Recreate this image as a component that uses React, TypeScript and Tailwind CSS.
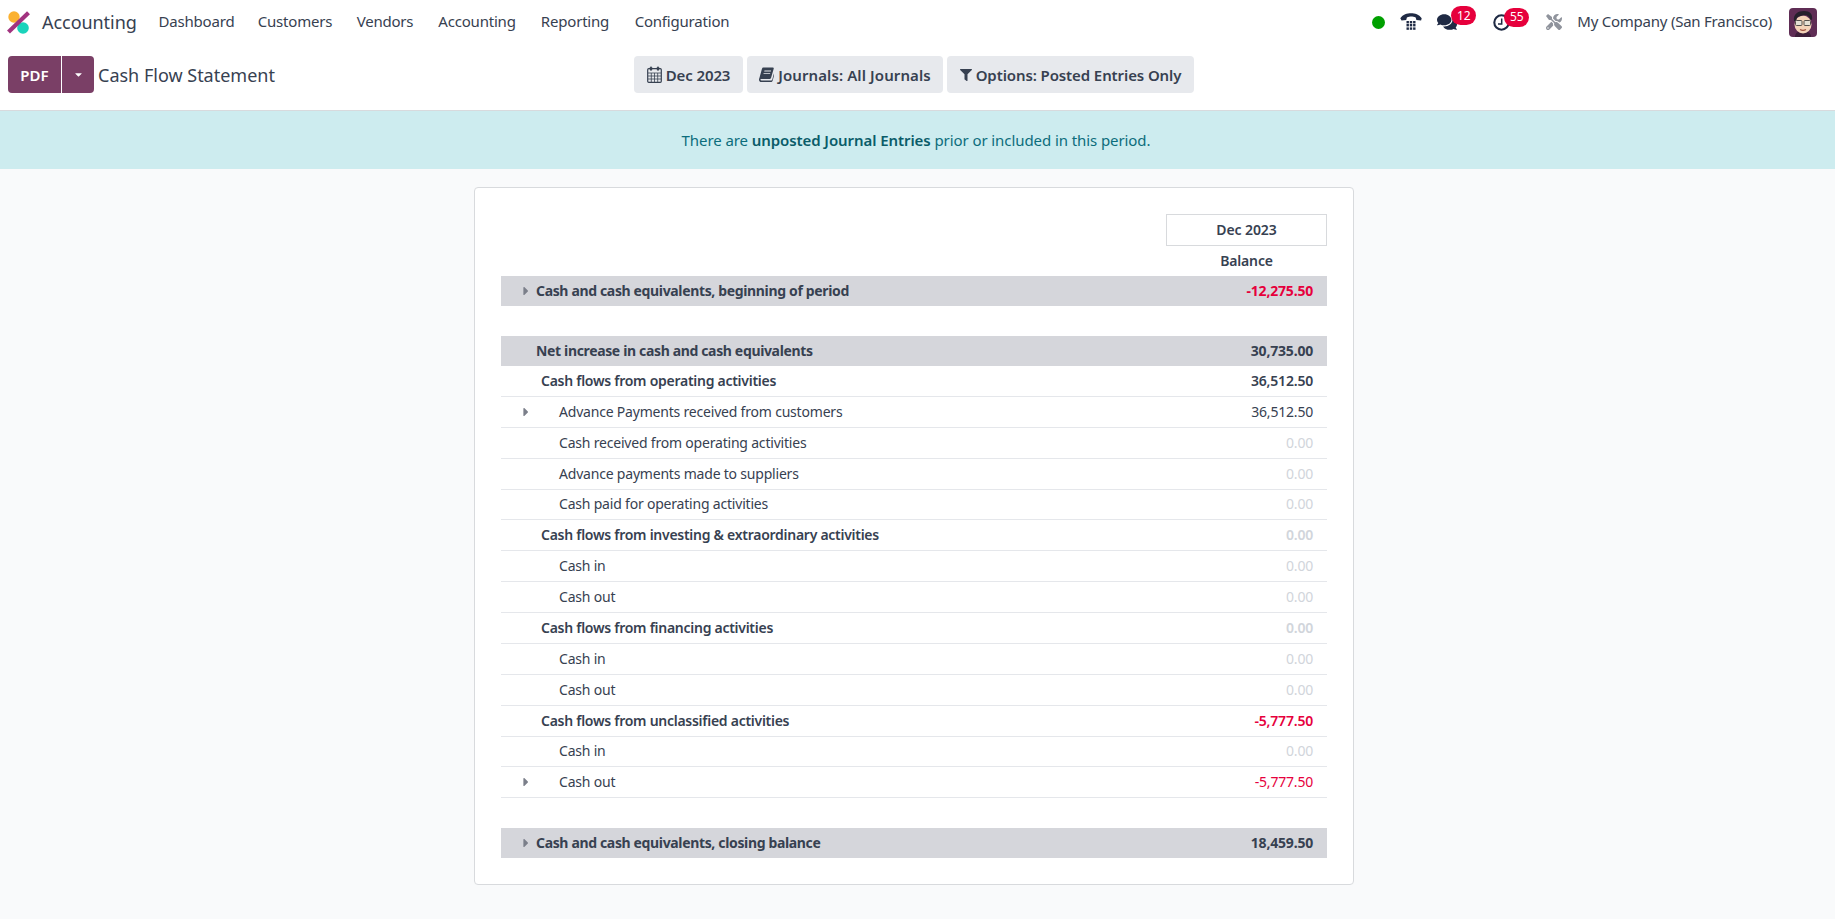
import React from "react";
import { FaFilter, FaComments, FaTools, FaCaretDown, FaCaretRight } from "react-icons/fa";

const FONT = "font-['Noto_Sans','Open_Sans',sans-serif]";

const Calendar = () => (
  <svg width="15" height="17" viewBox="0 0 15 17" className="shrink-0" fill="none" stroke="#374151">
    <rect x="0.7" y="2.7" width="13.6" height="13.6" rx="1" strokeWidth="1.2" />
    <path d="M1 7h13M1 10h13M1 13h13M4.3 7v9M7.5 7v9M10.7 7v9" strokeWidth="0.8" />
    <rect x="3" y="0.7" width="2" height="3.8" rx="1" fill="#374151" strokeWidth="0.4" />
    <rect x="10" y="0.7" width="2" height="3.8" rx="1" fill="#374151" strokeWidth="0.4" />
  </svg>
);

const Book = () => (
  <svg width="15" height="15" viewBox="0 0 15 15" className="shrink-0" fill="#374151">
    <path d="M4.3 0.5h9.6c.8 0 1 .6.8 1.3l-2.6 9c-.3 1-.9 1.2-1.7 1.2H2.2c-.6 0-.9.3-.8.8.1.5.6.7 1.2.7h9.6c.5 0 .8-.2 1-.7l2.2-8 .5.6-2.3 8.3c-.2.8-.9 1.3-1.7 1.3H2.3C1 15-.1 14 0 12.6c0-.5.2-1 .4-1.6l2.5-9C3.1 1.1 3.6.5 4.3.5zm1.2 3l-.3.9h6.6l.3-.9zm-.8 2.4l-.3.9h6.6l.3-.9z" fillRule="evenodd" />
  </svg>
);

const Tty = () => (
  <svg width="22" height="18" viewBox="0 0 22 18" fill="#1f2a44">
    <path d="M0.3 5.2C3 1.5 7 .3 11 .3s8 1.2 10.7 4.9l-.6 2.4-4.7-.5-.7-2.7c-1.5-.6-3.2-.8-4.4-.8s-2.9.2-4.4.8l-.7 2.7-4.7.5z" />
    {[8, 11, 14.4].flatMap((y) =>
      [6.5, 9.8, 13.1].map((x) => <rect key={x + "-" + y} x={x} y={y} width="2.4" height="2.4" />),
    )}
  </svg>
);

const Clock = () => (
  <svg width="17" height="17" viewBox="0 0 17 17" fill="none" stroke="#1f2a44">
    <circle cx="8.5" cy="8.5" r="7.2" strokeWidth="2.1" />
    <path d="M8.7 4.5V10H5" strokeWidth="1.5" />
  </svg>
);

const Logo = () => (
  <svg width="24" height="24" viewBox="0 0 24 24">
    <circle cx="7" cy="7" r="5.7" fill="#fbb130" />
    <circle cx="16" cy="18" r="5.8" fill="#1ad3bb" />
    <path d="M21.5 2.7 1.5 22" stroke="#a2337f" strokeWidth="4.2" />
  </svg>
);

const Avatar = () => (
  <svg width="28" height="29" viewBox="0 0 28 29" className="rounded-[4px]">
    <rect width="28" height="29" fill="#5f2d55" />
    <path d="M6 29c0-4 3-6 8-6s8 2 8 6z" fill="#3d1f3a" />
    <ellipse cx="14" cy="16.5" rx="8.5" ry="9" fill="#f3d3b8" />
    <path d="M5 13C4 6 9 3 15 3c6 0 9 3 8 9l-2-1c-1-3-3-4-5-4-3 1-7 1-8 3l-1 3z" fill="#25202c" />
    <rect x="6.5" y="12.5" width="6.5" height="5" rx="1" fill="#e4e0d4" stroke="#55514c" strokeWidth="1" />
    <rect x="15" y="12.5" width="6.5" height="5" rx="1" fill="#e4e0d4" stroke="#55514c" strokeWidth="1" />
    <path d="M11 21.5c2 1.2 4 1.2 6 0" stroke="#a0513f" strokeWidth="1.2" fill="none" />
  </svg>
);

type Row = {
  label: string;
  value: string;
  kind: "total" | "section" | "line" | "gap";
  caret?: boolean;
};

const rows: Row[] = [
  { label: "Cash and cash equivalents, beginning of period", value: "-12,275.50", kind: "total", caret: true },
  { label: "", value: "", kind: "gap" },
  { label: "Net increase in cash and cash equivalents", value: "30,735.00", kind: "total" },
  { label: "Cash flows from operating activities", value: "36,512.50", kind: "section" },
  { label: "Advance Payments received from customers", value: "36,512.50", kind: "line", caret: true },
  { label: "Cash received from operating activities", value: "0.00", kind: "line" },
  { label: "Advance payments made to suppliers", value: "0.00", kind: "line" },
  { label: "Cash paid for operating activities", value: "0.00", kind: "line" },
  { label: "Cash flows from investing & extraordinary activities", value: "0.00", kind: "section" },
  { label: "Cash in", value: "0.00", kind: "line" },
  { label: "Cash out", value: "0.00", kind: "line" },
  { label: "Cash flows from financing activities", value: "0.00", kind: "section" },
  { label: "Cash in", value: "0.00", kind: "line" },
  { label: "Cash out", value: "0.00", kind: "line" },
  { label: "Cash flows from unclassified activities", value: "-5,777.50", kind: "section" },
  { label: "Cash in", value: "0.00", kind: "line" },
  { label: "Cash out", value: "-5,777.50", kind: "line", caret: true },
  { label: "", value: "", kind: "gap" },
  { label: "Cash and cash equivalents, closing balance", value: "18,459.50", kind: "total", caret: true },
];

function valueColor(v: string) {
  if (v === "0.00") return "text-[#d1d5db]";
  if (v.startsWith("-")) return "text-[#e6003c]";
  return "";
}

const ReportRow = ({ r }: { r: Row }) => {
  if (r.kind === "gap") return <div className="h-[30px]" />;
  const total = r.kind === "total";
  const section = r.kind === "section";
  const vc = valueColor(r.value);
  return (
    <div
      className={
        total
          ? "flex h-[30px] items-center bg-[#d5d6db] pr-[14px] font-bold"
          : "flex h-[30.88px] items-center border-b border-[#e5e7eb] pr-[14px]"
      }
    >
      <span className="flex w-[35px] shrink-0 justify-end pr-[3.5px] text-[#7b7f8a]">
        {r.caret && <FaCaretRight className="text-[14px]" />}
      </span>
      <span
        className={
          total
            ? "flex-1 tracking-[-0.35px]"
            : section
              ? "flex-1 pl-[5px] font-[560] tracking-[-0.27px]"
              : "flex-1 pl-[23px] tracking-[-0.2px]"
        }
      >
        {r.label}
      </span>
      <span className={`tracking-[-0.2px] ${section ? "font-[560]" : ""} ${vc}`}>{r.value}</span>
    </div>
  );
};

const NAV: [string, string][] = [
  ["Dashboard", "w-[99px]"],
  ["Customers", "w-[98px]"],
  ["Vendors", "w-[82px]"],
  ["Accounting", "w-[102px]"],
  ["Reporting", "w-[94px]"],
  ["Configuration", "w-[120px]"],
];

const Badge = ({ n, pos }: { n: string; pos: string }) => (
  <span
    className={`absolute top-[-6px] flex h-[19px] w-[25px] items-center justify-center rounded-full bg-[#e6003c] text-[12px] leading-none text-white ${pos}`}
  >
    {n}
  </span>
);

export default function App() {
  return (
    <div className={`flex min-h-[919px] flex-col bg-[#f9fafb] text-[14px] leading-[20px] text-[#374151] ${FONT}`}>
      <header className="flex h-[44px] items-center bg-white pl-[7px] pr-[18px]">
        <Logo />
        <span className="ml-[11px] w-[94px] whitespace-nowrap text-[18px] tracking-[-0.05px]">Accounting</span>
        <nav className="mb-[2px] ml-[11px] flex text-[15px]">
          {NAV.map(([n, w]) => (
            <span key={n} className={`${w} text-center tracking-[-0.2px]`}>
              {n}
            </span>
          ))}
        </nav>
        <div className="ml-auto flex items-center">
          <span className="h-[13px] w-[13px] rounded-full bg-[#00a000]" />
          <span className="ml-[15px] flex"><Tty /></span>
          <span className="relative ml-[15px] flex text-[#1f2a44]">
            <FaComments className="text-[20px]" />
            <Badge n="12" pos="left-[14px]" />
          </span>
          <span className="relative ml-[36px] flex">
            <Clock />
            <Badge n="55" pos="left-[11px]" />
          </span>
          <span className="ml-[36px] flex text-[#8f939c]">
            <FaTools className="text-[16px]" />
          </span>
          <span className="mb-[2px] ml-[15px] text-[15px] tracking-[-0.24px]">My Company (San Francisco)</span>
          <span className="ml-[17px] flex"><Avatar /></span>
        </div>
      </header>

      <section className="flex h-[67px] items-start border-b border-[#d8dadd] bg-white pl-[8px] pt-[12px]">
        <div className="flex w-[626px] items-center">
          <div className="flex h-[37px] overflow-hidden rounded-[4px] text-white">
            <span className="flex w-[53px] items-center justify-center bg-[#7a3f66] text-[15px] font-semibold">PDF</span>
            <span className="flex w-[33px] items-center justify-center border-l border-white bg-[#7a3f66]">
              <FaCaretDown className="text-[11px]" />
            </span>
          </div>
          <span className="ml-[4px] text-[18px]">Cash Flow Statement</span>
        </div>
        <div className="flex gap-[4px] text-[15px] font-semibold">
          <span className="flex h-[37px] w-[109px] items-center justify-center gap-[4px] rounded-[4px] bg-[#e7e9ed]">
            <Calendar />
            <span className="tracking-[-0.1px]">Dec 2023</span>
          </span>
          <span className="flex h-[37px] w-[196px] items-center justify-center gap-[4px] rounded-[4px] bg-[#e7e9ed]">
            <Book />
            <span className="tracking-[0.1px]">Journals: All Journals</span>
          </span>
          <span className="flex h-[37px] w-[247px] items-center justify-center gap-[4px] rounded-[4px] bg-[#e7e9ed]">
            <FaFilter className="text-[12px]" />
            <span className="tracking-[-0.1px]">Options: Posted Entries Only</span>
          </span>
        </div>
      </section>

      <div className="flex h-[58px] items-center justify-center bg-[#cdecef] pr-[3px] text-[15px] text-[#0c6d7c]">
        <span className="tracking-[-0.08px]">
          There are <b className="font-semibold text-[#0a5c69]">unposted Journal Entries</b> prior or included in this period.
        </span>
      </div>

      <main className="flex justify-center pr-[7px] pt-[18px]">
        <div className="w-[880px] rounded-[4px] border border-[#d8dadd] bg-white px-[26px] py-[26px]">
          <div className="flex flex-col items-end">
            <div className="flex h-[32px] w-[161px] items-center justify-center border border-[#d8dadd] font-[560] tracking-[-0.1px]">
              Dec 2023
            </div>
            <div className="flex h-[30px] w-[161px] items-center justify-center font-[560] tracking-[-0.15px]">Balance</div>
          </div>
          {rows.map((r, i) => (
            <ReportRow key={i} r={r} />
          ))}
        </div>
      </main>
    </div>
  );
}
